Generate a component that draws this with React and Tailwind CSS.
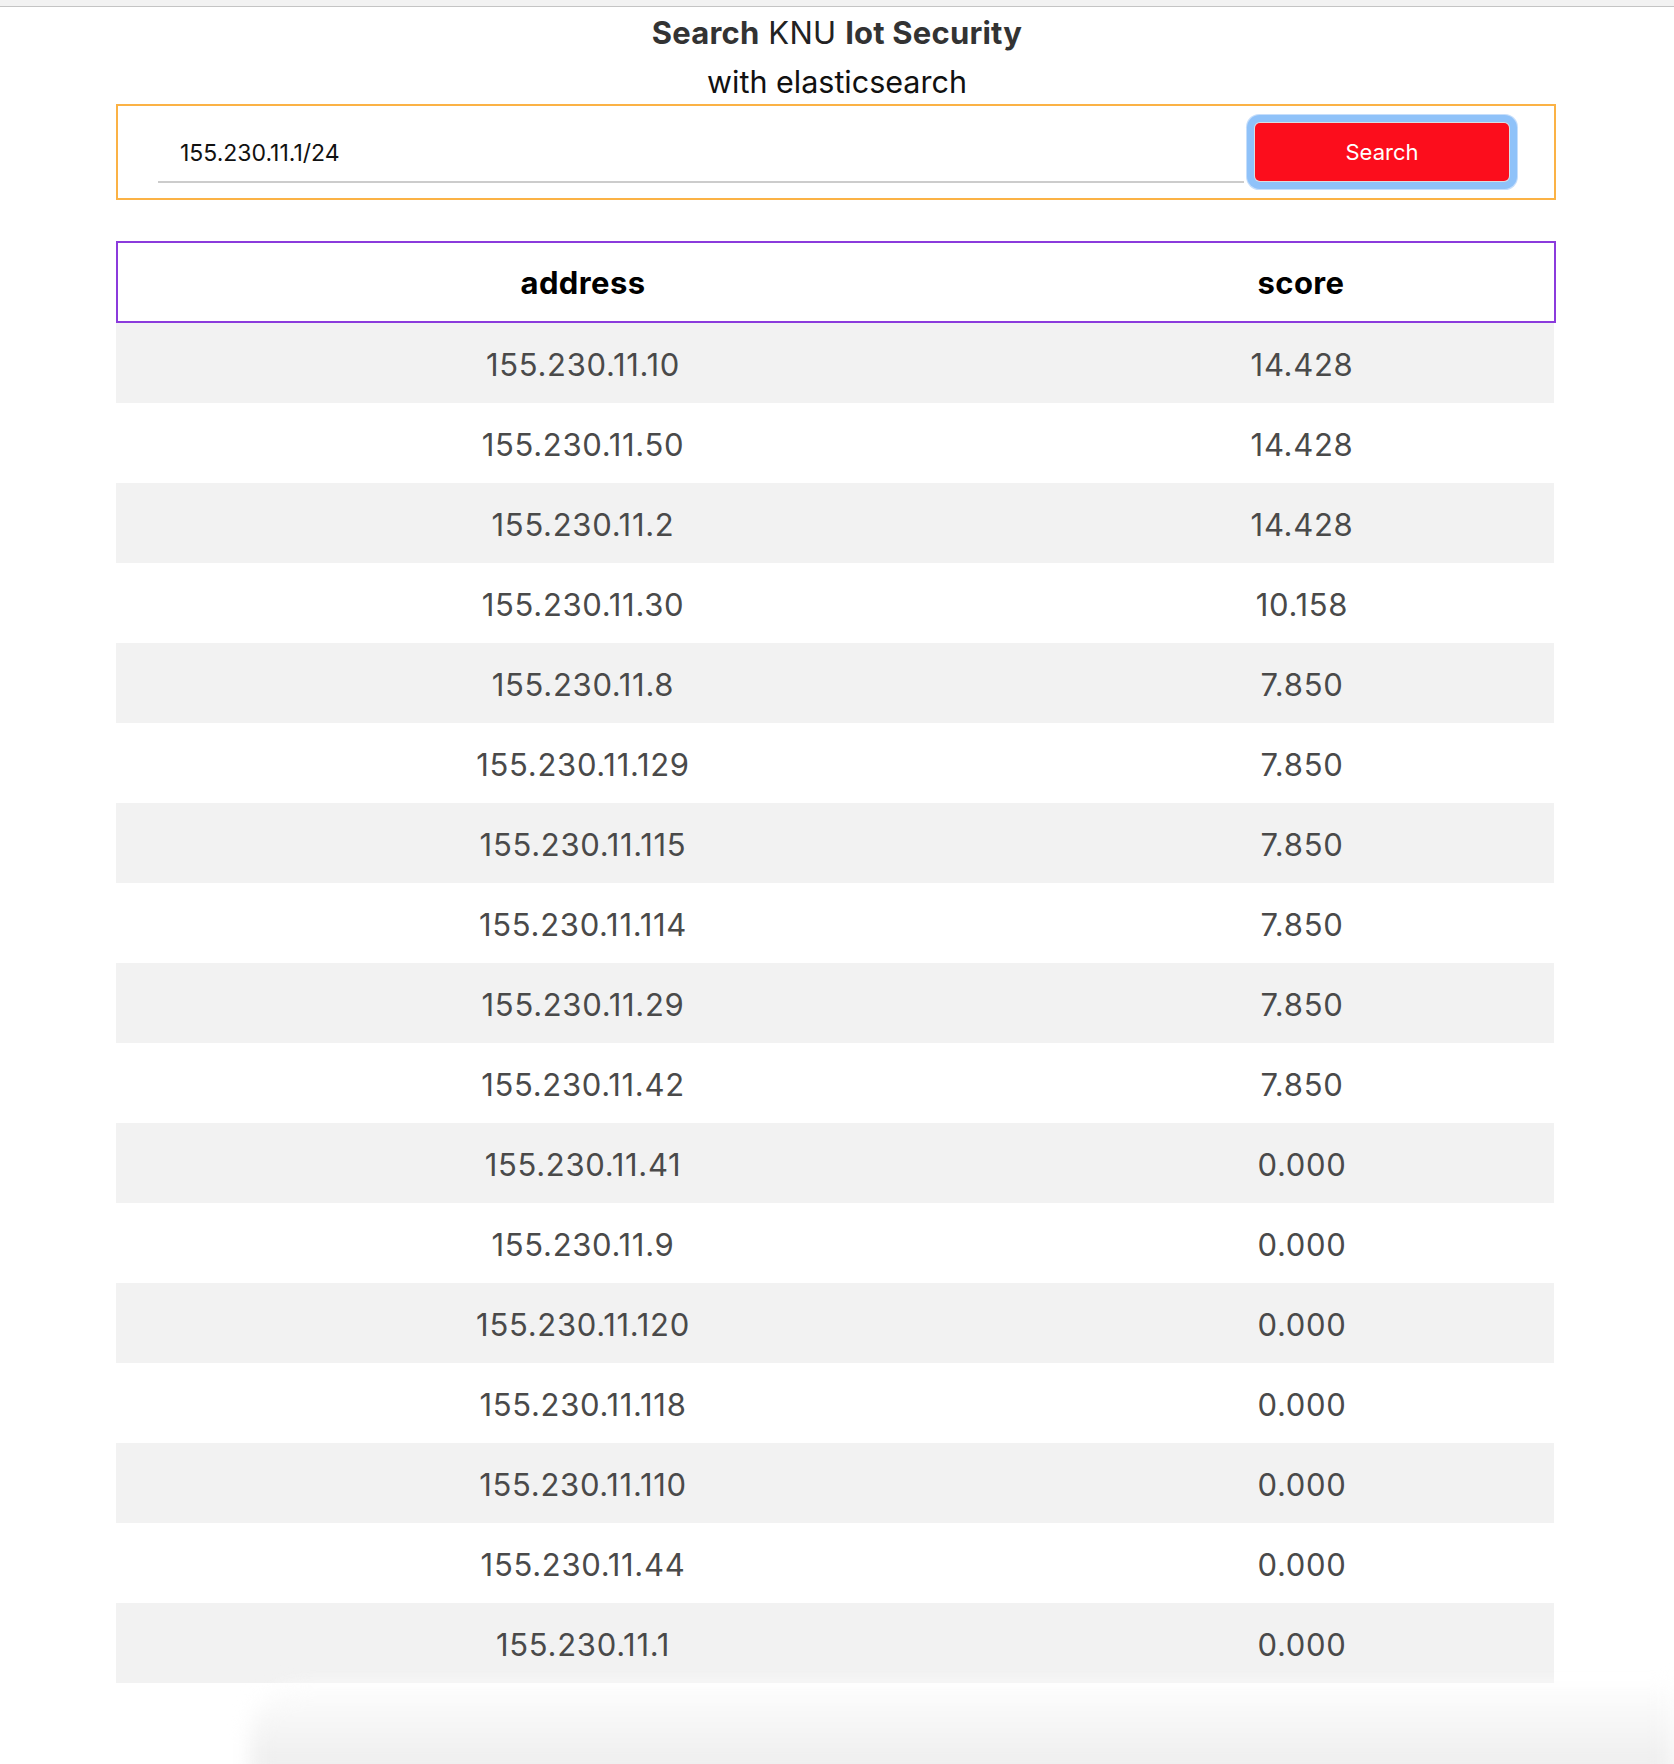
import { useState } from "react";

const ROWS = [
  ["155.230.11.10", "14.428"],
  ["155.230.11.50", "14.428"],
  ["155.230.11.2", "14.428"],
  ["155.230.11.30", "10.158"],
  ["155.230.11.8", "7.850"],
  ["155.230.11.129", "7.850"],
  ["155.230.11.115", "7.850"],
  ["155.230.11.114", "7.850"],
  ["155.230.11.29", "7.850"],
  ["155.230.11.42", "7.850"],
  ["155.230.11.41", "0.000"],
  ["155.230.11.9", "0.000"],
  ["155.230.11.120", "0.000"],
  ["155.230.11.118", "0.000"],
  ["155.230.11.110", "0.000"],
  ["155.230.11.44", "0.000"],
  ["155.230.11.1", "0.000"],
];

export default function App() {
  const [query, setQuery] = useState("155.230.11.1/24");

  return (
    <div className="min-h-[1764px] bg-white font-['Inter','Liberation_Sans',sans-serif] overflow-hidden">
      {/* browser chrome strip */}
      <div className="h-[7px] bg-[#f2f2f2] border-b border-[#c4c4c4]" />

      {/* Title */}
      <div className="mt-[6px] text-center">
        <h1 className="text-[31px] leading-[40px] text-[#333] tracking-[0.2px]">
          <span className="font-bold">Search</span>{" "}
          <span className="text-[#222]">KNU</span>{" "}
          <span className="font-bold">Iot Security</span>
        </h1>
        <p className="mt-[9px] text-[30.5px] leading-[40px] text-[#111]">with elasticsearch</p>
      </div>

      {/* Search box */}
      <div className="ml-[116px] w-[1440px] mt-[2px] h-[96px] border-2 border-[#fbb245] flex items-center pl-[40px] pr-[45px]">
        <input
          value={query}
          onChange={e => setQuery(e.target.value)}
          className="h-[62px] flex-1 border-b-2 border-[#cccccc] pl-[22px] pt-[4px] text-[23px] text-[#111] outline-none bg-transparent"
        />
        <button className="ml-[11px] w-[254px] h-[58px] rounded-[5px] bg-[#fc0d1c] text-white text-[22px] shadow-[0_0_0_1px_#d9dde2,0_0_0_8px_#8fc2f9,0_0_0_9px_#c6defb]">
          Search
        </button>
      </div>

      {/* Results table */}
      <div className="ml-[116px] w-[1440px] mt-[41px]">
        <div className="h-[82px] border-2 border-[#8b3bdc] grid grid-cols-[930px_1fr] items-center pt-[2px] text-[31px] tracking-[0.4px] font-bold text-black">
          <div className="text-center">address</div>
          <div className="text-center">score</div>
        </div>
        <div className="mr-[2px]">
          {ROWS.map(([addr, score], i) => (
            <div
              key={addr}
              className={`h-[80px] grid grid-cols-[934px_1fr] items-center pt-[4px] text-[31px] tracking-[0.7px] text-[#4a4a4a] ${
                i % 2 === 0 ? "bg-[#f2f2f2]" : "bg-white"
              }`}
            >
              <div className="text-center">{addr}</div>
              <div className="text-center">{score}</div>
            </div>
          ))}
        </div>
      </div>

      {/* faded panel edge at the bottom */}
      <div className="mt-[4px] ml-[250px] h-[90px] rounded-tl-[50px] bg-gradient-to-b from-[#fdfdfd] to-[#ececec] blur-[10px]" />
    </div>
  );
}
